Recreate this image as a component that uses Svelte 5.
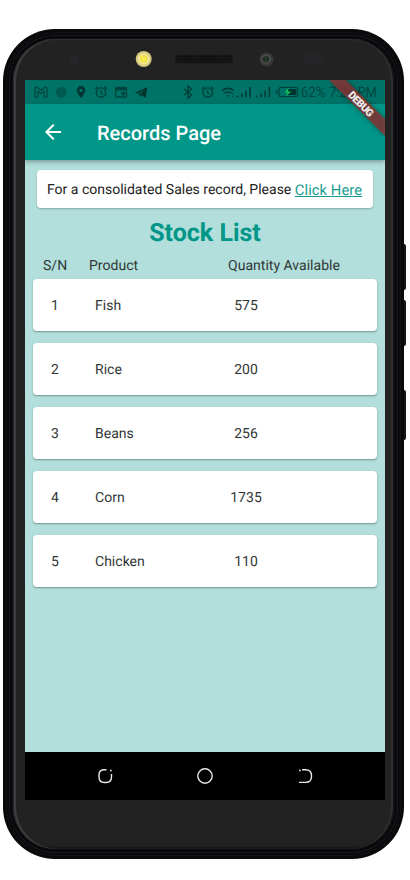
<script>
  const stock = [
    { name: 'Fish', quantity: 575 },
    { name: 'Rice', quantity: 200 },
    { name: 'Beans', quantity: 256 },
    { name: 'Corn', quantity: 1735 },
    { name: 'Chicken', quantity: 110 }
  ];
</script>

{#snippet alarm(x)}
  <g transform="translate({x} 12)" fill="none" stroke="#003f38" stroke-width="1.3">
    <circle r="4.7" cy=".5" />
    <path d="M0-2v3l2 1.2M-5.8-3l2.6-2.3M5.8-3L3.2-5.3" />
  </g>
{/snippet}

<div class="stage">
  <i class="key k1"></i><i class="key k2"></i><i class="key k3"></i>
  <div class="phone">
    <div class="rim">
      <div class="face">
        <div class="bezel">
          <svg width="360" height="40" viewBox="25 40 360 40">
            <defs>
              <pattern id="mesh" width="3" height="3" patternUnits="userSpaceOnUse">
                <rect width="3" height="3" fill="#111" /><circle cx="1" cy="1" r=".6" fill="#2b2b2b" />
              </pattern>
              <radialGradient id="flash">
                <stop offset="0" stop-color="#fff36a" /><stop offset=".4" stop-color="#f1df38" />
                <stop offset=".55" stop-color="#eee18a" /><stop offset="1" stop-color="#c9bd79" />
              </radialGradient>
            </defs>
            <circle cx="74" cy="59.5" r="4.5" fill="#26262a" />
            <circle cx="143.7" cy="59" r="8" fill="url(#flash)" />
            <circle cx="143.7" cy="59" r="5" fill="none" stroke="#f6efb4" stroke-width=".8" />
            <rect x="175" y="54.5" width="58" height="9" rx="3" fill="#1a1a1a" />
            <rect x="176" y="55" width="56" height="8" rx="2" fill="url(#mesh)" />
            <circle cx="266.5" cy="59.5" r="7" fill="#383838" />
            <circle cx="266.2" cy="59.3" r="5" fill="#484848" />
            <circle cx="266" cy="59.3" r="3" fill="#18251a" />
            <path d="M264.5 58h3M264.5 60.7h3" stroke="#3e6d3d" stroke-width=".8" />
            <rect x="303" y="53.5" width="23" height="11" rx="5.5" fill="#252528" />
          </svg>
        </div>

        <main class="screen">
          <div class="status">
            <svg width="360" height="24" viewBox="0 0 360 24">
              <path d="M10 17V8.8c0-1.5 1.3-2 2.5-1.2L16 10.3l3.5-2.7c1.2-.8 2.5-.3 2.5 1.2V17h-3v-5.8L16 13.5l-3-2.3V17z" fill="none" stroke="#00453d" stroke-width="1.2" />
              <circle cx="36.3" cy="12.3" r="5.5" fill="#005c52" />
              <path d="M56 6a4.3 4.3 0 0 0-4.3 4.3C51.7 13.5 56 18 56 18s4.3-4.5 4.3-7.7A4.3 4.3 0 0 0 56 6zm0 2.8a1.6 1.6 0 1 1 0 3.2 1.6 1.6 0 0 1 0-3.2z" fill="#003630" fill-rule="evenodd" />
              {@render alarm(76)}
              <rect x="90.7" y="7.5" width="10.8" height="9.5" rx=".8" fill="none" stroke="#00453d" stroke-width="1.3" />
              <path d="M91 8h10.5v2.500H91zM96.500 12h3.500v3.500h-3.500z" fill="#00453d" />
              <path d="M109.500 13L122.500 7l-2 11-4.300-3-1.700 2-.8-3.500z" fill="#003630" />
              <path d="M114 13.500l5-3.700-3.800 4.500" fill="#007367" />
              <path d="M159 9l7.500 6-3.500 3.200V6l3.500 3.200-7.500 6" fill="none" stroke="#003f38" stroke-width="1.3" />
              {@render alarm(182.7)}
              <path d="M197 10.500q5.800-4.300 11.600 0M199.300 13.200q3.500-2.500 7 0" fill="none" stroke="#003f38" stroke-width="1.6" />
              <path d="M201.300 15h3l-1.500 2.300zM207 13h1v1.300h-1zM207 15.800h1V17h-1zM211.800 15.500h1.800v2h-1.800zM216 13.500h1.700v4H216zM220 10.500h1.700v7H220zM224.200 7h1.700v10.500h-1.700zM230.900 15.500h1.800v2h-1.800zM235.200 13.500h1.700v4h-1.700zM239.300 10.500h1.700v7h-1.700zM243.500 7h1.700v10.500h-1.700zM250.800 10.300h1.400v3.800h-1.400z" fill="#003f38" />
              <rect x="254" y="7.5" width="18.5" height="9" rx="1.3" fill="none" stroke="#003f38" stroke-width="1.2" />
              <rect x="262" y="9" width="9.2" height="6" fill="#003630" />
              <path d="M263.800 7.600l-4.300 4.900h3l-1.500 4 5-5h-3.200z" fill="#16c558" />
              <g class="clock">
                <text x="275.8" y="17.2" textLength="24.5" lengthAdjust="spacingAndGlyphs">62%</text>
                <text x="304.3" y="17.2" textLength="47.5" lengthAdjust="spacingAndGlyphs">7:26 PM</text>
              </g>
            </svg>
          </div>

          <header>
            <svg width="24" height="24" viewBox="0 0 24 24"><path d="M20 11H7.830l5.590-5.590L12 4l-8 8 8 8 1.410-1.410L7.830 13H20z" fill="#fff" /></svg>
            <h1>Records Page</h1>
          </header>

          <div class="notice"><span>For a consolidated Sales record, Please</span><a href="#sales">Click Here</a></div>
          <h2>Stock List</h2>
          <div class="columns"><span>S/N</span><span>Product</span><span>Quantity Available</span></div>
          <section>
            {#each stock as item, i}
              <div class="card"><span>{i + 1}</span><span>{item.name}</span><span>{item.quantity}</span></div>
            {/each}
          </section>

          <nav>
            <svg width="360" height="48" viewBox="0 0 360 48" fill="none" stroke="#e8e8e8" stroke-width="1.4">
              <path d="M81.500 17.800h-2q-5.500 0-5.500 5v2q0 5.700 5.500 5.700h1.500q5.500 0 5.500-5.700V22" />
              <path d="M85 18.500h1.700M274 30.400h6.500q6 0 6-5.900v-.700q0-6-6-6h-3.500M274 18.500h1.700" />
              <circle cx="180" cy="24" r="7.2" />
            </svg>
          </nav>
          <svg class="debug" width="56" height="56" viewBox="0 0 56 56">
            <defs><filter id="ribbonShadow" x="-20%" y="-20%" width="140%" height="140%"><feGaussianBlur stdDeviation="2.5" /></filter></defs>
            <path d="M0 0h17l39 39v17z" fill="#000" opacity=".4" filter="url(#ribbonShadow)" />
            <path d="M0 0h17l39 39v17z" fill="#8c3533" opacity=".8" />
            <text class="label" transform="translate(32.3 23.7) rotate(45)" y="4" text-anchor="middle" textLength="31">DEBUG</text>
          </svg>
        </main>
      </div>
    </div>
  </div>
</div>

<style>
  :global(body) { margin: 0; background: #fff; }
  .stage { position: relative; width: 410px; height: 880px; padding: 29px 0 0 3px; box-sizing: border-box; overflow: hidden; font-family: Roboto, sans-serif; text-rendering: geometricPrecision; }
  .key { position: absolute; left: 396px; width: 10px; background: #171717; border-radius: 0 2px 2px 0; }
  .k1 { top: 244px; height: 46px; }
  .k2 { top: 300px; height: 46px; }
  .k3 { top: 390px; height: 50px; }
  .phone { position: relative; width: 401px; height: 830px; box-sizing: border-box; padding: 3px; border-radius: 52px; background: #090909; }
  .rim { height: 824px; box-sizing: border-box; padding: 7px; border-radius: 49px; background: #0b0c10; box-shadow: inset 0 0 0 1px #121214, inset 0 0 0 3px #090a0c, inset 0 0 0 4px #18181b, inset 0 0 0 6px #08090d; }
  .face { height: 810px; box-sizing: border-box; padding: 1px 12px; border-radius: 42px; background: #222; box-shadow: inset 1px 0 0 #292929, inset 3px 0 1px #404040, inset -1px 0 0 #111, inset -3px 0 1px #303030, inset 0 1px 1px #303034, inset 0 -2px 1px #181818; }
  .bezel { height: 40px; }
  .bezel svg, .status svg, nav svg { display: block; }
  .screen { position: relative; display: flex; flex-direction: column; width: 360px; height: 720px; background: #b2dfdb; color: #303736; font-size: 14px; overflow: hidden; }
  .status { height: 24px; background: #007368; flex: none; }
  .clock { fill: #00473f; font-size: 14.5px; }
  header { display: flex; align-items: center; height: 56px; flex: none; padding-left: 16px; background: #009688; color: #fff; box-shadow: 0 2px 4px rgba(0,0,0,.3); }
  h1 { margin: 1px 0 0 32px; font-size: 20px; line-height: 24px; font-weight: 500; letter-spacing: 0; }
  .notice { display: flex; align-items: center; height: 38px; box-sizing: border-box; flex: none; margin: 10px 12px 0; padding: 1px 10px 0; background: #fff; border-radius: 4px; box-shadow: 0 1px 2px rgba(0,0,0,.25); color: #222; white-space: nowrap; }
  .notice a { color: #159e90; font-size: 14.7px; margin-left: 3.5px; text-decoration: underline; letter-spacing: .1px; }
  h2 { margin: 9px 0 0; height: 32px; line-height: 34px; text-align: center; font-size: 25px; font-weight: 700; color: #009688; }
  .columns { display: flex; height: 30px; line-height: 35px; padding-left: 18px; letter-spacing: .02px; }
  .columns span:first-child { width: 46px; }
  .columns span:nth-child(2) { width: 139px; }
  section { display: flex; flex-direction: column; gap: 12px; padding: 0 8px; }
  .card { display: flex; height: 52px; line-height: 54px; background: #fff; border-radius: 4px; box-shadow: 0 1px 2px rgba(0,0,0,.35); letter-spacing: .02px; }
  .card span:first-child { width: 44px; text-align: center; }
  .card span:nth-child(2) { width: 119px; padding-left: 18px; }
  .card span:last-child { width: 64px; text-align: center; }
  nav { height: 48px; margin-top: auto; background: #000; }
  .debug { position: absolute; right: 0; top: 0; }
  .label { fill: #eee; font-size: 10.5px; font-weight: 900; }
</style>
